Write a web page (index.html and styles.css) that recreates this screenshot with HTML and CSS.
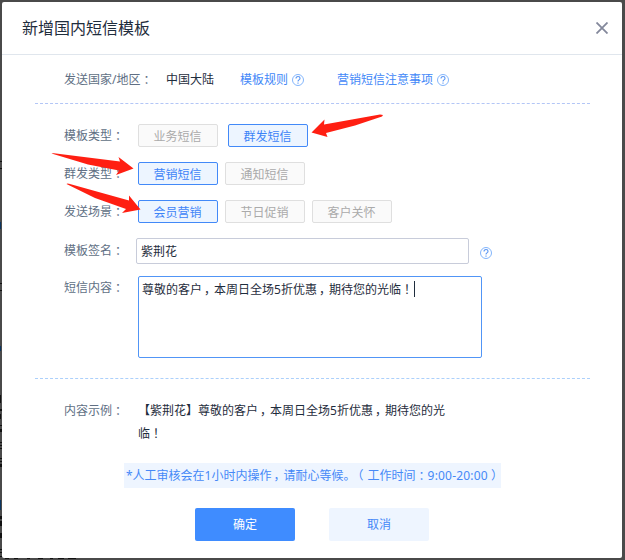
FILE: index.html
```html
<!DOCTYPE html>
<html lang="zh-CN">
<head>
<meta charset="utf-8">
<title>新增国内短信模板</title>
<link rel="stylesheet" href="styles.css">
</head>
<body>
<svg class="backdrop" viewBox="0 0 625 560" aria-hidden="true">
  <g fill="#111">
    <path d="M0 161h2v1H0zM0 168h2v1H0zM0 283h2v1H0zM0 290h2v1H0zM0 395h1v8H0zM0 409h2v2H0zM0 414h1v5H0zM0 425h2v1H0zM0 429h2v3H0zM0 442h2v1H0zM0 445h2v1H0zM0 448h2v1H0zM0 458h2v1H0zM0 461h2v1H0zM0 464h2v3H0zM0 516h2v3H0zM0 521h2v5H0zM0 533h2v5H0zM0 549h2v1H0zM0 552h2v1H0zM0 556h2v1H0z"/>
    <path d="M5 558h4v1H5zM14 558h4v1h-4zM27 558h3v1h-3zM38 558h5v1h-5zM50 558h3v1h-3zM58 558h6v1h-6zM68 558h8v1h-8z"/>
  </g>
  <path fill="#0b3560" d="M0 222h1v7H0zM0 346h1v5H0zM0 500h1v10H0z"/>
</svg>
<svg class="defs" aria-hidden="true">
  <symbol id="help" viewBox="0 0 12 12">
    <circle cx="6" cy="6" r="5.5" fill="none" stroke="#83b5fb"/>
    <path d="M4 4.600Q4 2.500 6 2.500t2 1.900Q8 5.200 6.900 5.900 6 6.400 6 7.500M6 8.500v1.200" fill="none" stroke="#5c98f5" stroke-width="1.100"/>
  </symbol>
</svg>
<main class="dialog">
  <header class="head">
    <h1>新增国内短信模板</h1>
    <svg class="close" viewBox="0 0 12 12"><path d="M.5 .5l11 11M11.500 .5L.5 11.500"/></svg>
  </header>
  <section class="region">
    <span class="label">发送国家/地区<i>：</i></span>
    <span class="country">中国大陆</span>
    <a class="link rules">模板规则<svg class="help"><use href="#help"/></svg></a>
    <a class="link">营销短信注意事项<svg class="help"><use href="#help"/></svg></a>
  </section>
  <section class="form">
    <div class="row wide">
      <span class="label">模板类型<i>：</i></span>
      <button class="opt">业务短信</button><button class="opt on">群发短信</button>
    </div>
    <div class="row">
      <span class="label">群发类型<i>：</i></span>
      <button class="opt on">营销短信</button><button class="opt">通知短信</button>
    </div>
    <div class="row">
      <span class="label">发送场景<i>：</i></span>
      <button class="opt on">会员营销</button><button class="opt">节日促销</button><button class="opt">客户关怀</button>
    </div>
    <div class="sign">
      <span class="label">模板签名<i>：</i></span>
      <div class="input">紫荆花</div>
      <svg class="help"><use href="#help"/></svg>
    </div>
    <div class="content">
      <span class="label">短信内容<i>：</i></span>
      <div class="area"><span>尊敬的客户<i class="comma">，</i>本周日全场5折优惠<i class="comma">，</i>期待您的光临<i>！</i></span><b class="caret"></b></div>
    </div>
  </section>
  <section class="example">
    <span class="label">内容示例<i>：</i></span>
    <p>【紫荆花】尊敬的客户<i class="comma">，</i>本周日全场5折优惠<i class="comma">，</i>期待您的光临<i>！</i></p>
  </section>
  <p class="notice">*人工审核会在1小时内操作<i class="comma">，</i>请耐心等候。<i class="open">（</i>工作时间<i>：</i><span class="hours">9:00-20:00</span><i>）</i></p>
  <footer class="foot"><button class="btn primary">确定</button><button class="btn">取消</button></footer>
</main>
<svg class="arrows" viewBox="0 0 625 560" aria-hidden="true">
  <path d="M51.500 153.500Q52 153 54 153.300L120 161.500L118.500 157L133.500 168.500L116 175L119 170.500L88 164.500Z"/>
  <path d="M66.500 184Q67 183.300 69 183.800L129 200.500L129 195.500L140.500 209.500L122 213L126 209L95 198Z"/>
  <path d="M383 115L382 116.500L355 125.500L326 133L327.500 137L311.500 132.500L324.500 119.500L324 124.500L380 114.500Z"/>
</svg>
</body>
</html>
```
FILE: styles.css
```css
* { box-sizing: border-box; }
body {
  margin: 0;
  width: 625px;
  height: 560px;
  padding: 2px 3px 2px 2px;
  overflow: hidden;
  background: #4a4a4a;
  color: #1f2d3d;
  font: 12px/18px "Noto Sans", "Noto Sans CJK SC", sans-serif;
  text-spacing-trim: space-all;
}
h1, p { margin: 0; font-weight: 400; }
button { font: inherit; padding: 0; }
/* punctuation centred in its full-width cell */
i { font-style: normal; font-feature-settings: "halt"; padding: 0 3px; }
i.comma { padding: 0 4px 0 2px; }
i.open { padding: 0 4px 0 2px; }
.defs { position: absolute; width: 0; height: 0; }
.backdrop, .arrows {
  position: absolute;
  top: 0;
  left: 0;
  width: 625px;
  height: 560px;
  pointer-events: none;
}
.arrows { fill: #ff1f12; }
.dialog {
  height: 556px;
  background: #fff;
  border-radius: 2px;
}
.head {
  display: flex;
  justify-content: space-between;
  align-items: center;
  height: 53px;
  padding: 0 14px 0 20px;
  border-bottom: 1px solid #e0e6ed;
}
.head h1 { font-size: 16px; line-height: 24px; }
.close { width: 12px; height: 12px; stroke: #83889b; stroke-width: 1.8; }
.label { flex: none; color: #606f84; }
.help { flex: none; width: 12px; height: 12px; }
.region {
  display: flex;
  align-items: center;
  height: 49px;
  margin: 0 32px 0 33px;
  padding: 2px 0 0 29px;
  border-bottom: 1px dashed #b3c6f6;
}
.country { margin: 0 26px 0 12px; }
.region .label { width: 90px; }
.link { display: flex; align-items: center; gap: 4px; color: #4288f8; }
.link .help { margin-top: -1px; }
.rules { margin-right: 33px; }
.form {
  margin: 0 32px 0 33px;
  padding: 20px 0 20px 29px;
  border-bottom: 1px dashed #acd0fb;
}
.row, .sign, .content { display: flex; }
.row { height: 23px; margin-bottom: 15px; align-items: center; gap: 7px; }
.row.wide { gap: 10px; }
.row .label { width: 67px; }
.row.wide .label { width: 64px; }
.opt {
  width: 80px;
  height: 23px;
  padding: 2px 1px 0 0;
  line-height: 19px;
  border: 1px solid #dfdfdf;
  border-radius: 2px;
  background: #fafafa;
  color: #aaa;
}
.opt.on { border-color: #4289f8; background: #edf5ff; color: #3d84f7; }
.sign { align-items: center; height: 26px; margin-bottom: 12px; }
.sign .label { width: 72px; }
.input {
  width: 333px;
  height: 26px;
  margin-right: 11px;
  padding-left: 4px;
  border: 1px solid #c8ccda;
  border-radius: 2px;
  line-height: 26px;
}
.sign .help { margin-top: 3px; }
.content { height: 82px; }
.content .label { width: 74px; padding-top: 3px; }
.area {
  display: flex;
  align-items: flex-start;
  width: 344px;
  height: 82px;
  padding: 4px 3px;
  border: 1px solid #5195f6;
  border-radius: 2px;
}
.caret { width: 1px; height: 16px; margin-left: 1px; background: #1f2d3d; }
.example { display: flex; padding: 20px 0 0 62px; line-height: 23px; }
.example .label { width: 74px; }
.example p { width: 320px; }
.notice {
  width: 377px;
  height: 25px;
  margin: 18px 0 20px 122px;
  padding-left: 2px;
  background: #eef5ff;
  color: #4689f7;
  line-height: 25px;
  white-space: nowrap;
}
.hours { letter-spacing: .2px; }
.foot { display: flex; gap: 34px; padding-left: 193px; }
.btn {
  width: 100px;
  height: 33px;
  border: 0;
  border-radius: 2px;
  background: #eef5ff;
  color: #4588f7;
}
.btn.primary { background: #3f8cff; color: #fff; }
```
